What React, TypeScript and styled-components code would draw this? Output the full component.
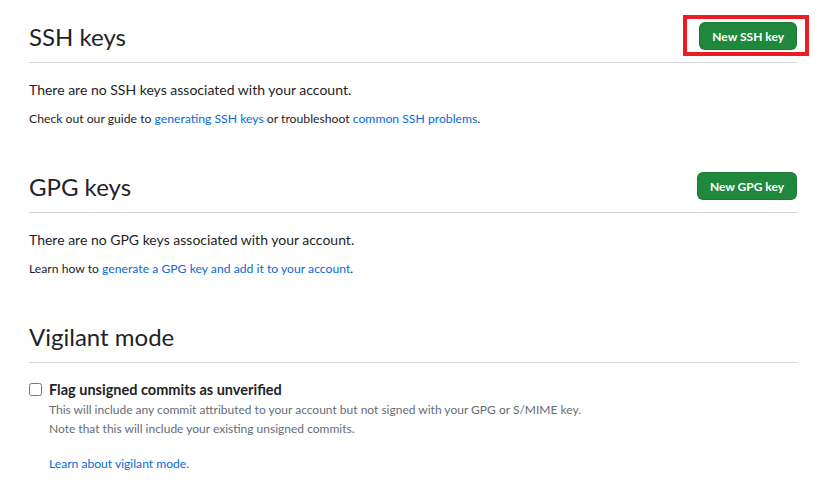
import React from "react";
import styled, { createGlobalStyle } from "styled-components";

const Global = createGlobalStyle`
  html, body { margin: 0; padding: 0; background: #ffffff; }
  body {
    font-family: Lato, "Liberation Sans", Arial, sans-serif;
    color: #1f2328;
    -webkit-font-smoothing: antialiased;
  }
`;

const Page = styled.div`
  padding: 24px 30px 0 29px;
  display: flex;
  flex-direction: column;
  gap: 46px;
`;

const Section = styled.section`
  display: flex;
  flex-direction: column;
`;

const Subhead = styled.div`
  display: flex;
  align-items: flex-start;
  justify-content: space-between;
  padding-bottom: 12px;
  border-bottom: 1px solid #d0d7de;
  margin-bottom: 16px;
`;

const Heading = styled.h2`
  margin: 0;
  font-size: 24px;
  font-weight: 400;
  line-height: 26px;
  color: #1f2328;
`;

const ButtonWrap = styled.div<{ $offset: number }>`
  position: relative;
  margin-top: ${(p) => p.$offset}px;
  margin-bottom: -2px;
`;

const Button = styled.button`
  display: block;
  height: 28px;
  padding: 0 12px;
  border: 1px solid rgba(31, 35, 40, 0.15);
  border-radius: 6px;
  background: #1f883d;
  color: #ffffff;
  font-family: Lato, "Liberation Sans", Arial, sans-serif;
  font-size: 12px;
  font-weight: 700;
  cursor: pointer;
`;

const Highlight = styled.span`
  position: absolute;
  left: -16px;
  right: -12px;
  top: -7px;
  bottom: -6px;
  border: 4px solid #ed1c24;
  pointer-events: none;
`;

const Lead = styled.p`
  margin: 0 0 10px;
  font-size: 14px;
  line-height: 21px;
  color: #1f2328;
`;

const Note = styled.p`
  margin: 0;
  font-size: 12.2px;
  line-height: 18px;
  color: #1f2328;
`;

const Link = styled.a`
  color: #0969da;
  text-decoration: none;
`;

const CheckRow = styled.label`
  display: flex;
  align-items: center;
  gap: 7px;
  font-size: 14.5px;
  font-weight: 700;
  line-height: 21px;
  color: #1f2328;
`;

const Box = styled.input`
  width: 13px;
  height: 13px;
  margin: 0;
  accent-color: #0969da;
`;

const Description = styled.div`
  padding-left: 20px;
  font-size: 12px;
  line-height: 19px;
  color: #656d76;
`;

const Learn = styled.p`
  margin: 17px 0 0;
  padding-left: 20px;
  font-size: 12.1px;
  line-height: 18px;
`;

export default function App() {
  return (
    <>
      <Global />
      <Page>
        <Section>
          <Subhead>
            <Heading>SSH keys</Heading>
            <ButtonWrap $offset={-2}>
              <Button>New SSH key</Button>
              <Highlight />
            </ButtonWrap>
          </Subhead>
          <Lead>There are no SSH keys associated with your account.</Lead>
          <Note>
            Check out our guide to <Link href="#">generating SSH keys</Link> or troubleshoot{" "}
            <Link href="#">common SSH problems</Link>.
          </Note>
        </Section>
        <Section>
          <Subhead>
            <Heading>GPG keys</Heading>
            <ButtonWrap $offset={-2}>
              <Button>New GPG key</Button>
            </ButtonWrap>
          </Subhead>
          <Lead>There are no GPG keys associated with your account.</Lead>
          <Note>
            Learn how to <Link href="#">generate a GPG key and add it to your account</Link>.
          </Note>
        </Section>
        <Section>
          <Subhead>
            <Heading>Vigilant mode</Heading>
          </Subhead>
          <CheckRow>
            <Box type="checkbox" />
            Flag unsigned commits as unverified
          </CheckRow>
          <Description>
            This will include any commit attributed to your account but not signed with your GPG or S/MIME key.
            <br />
            Note that this will include your existing unsigned commits.
          </Description>
          <Learn>
            <Link href="#">Learn about vigilant mode.</Link>
          </Learn>
        </Section>
      </Page>
    </>
  );
}
